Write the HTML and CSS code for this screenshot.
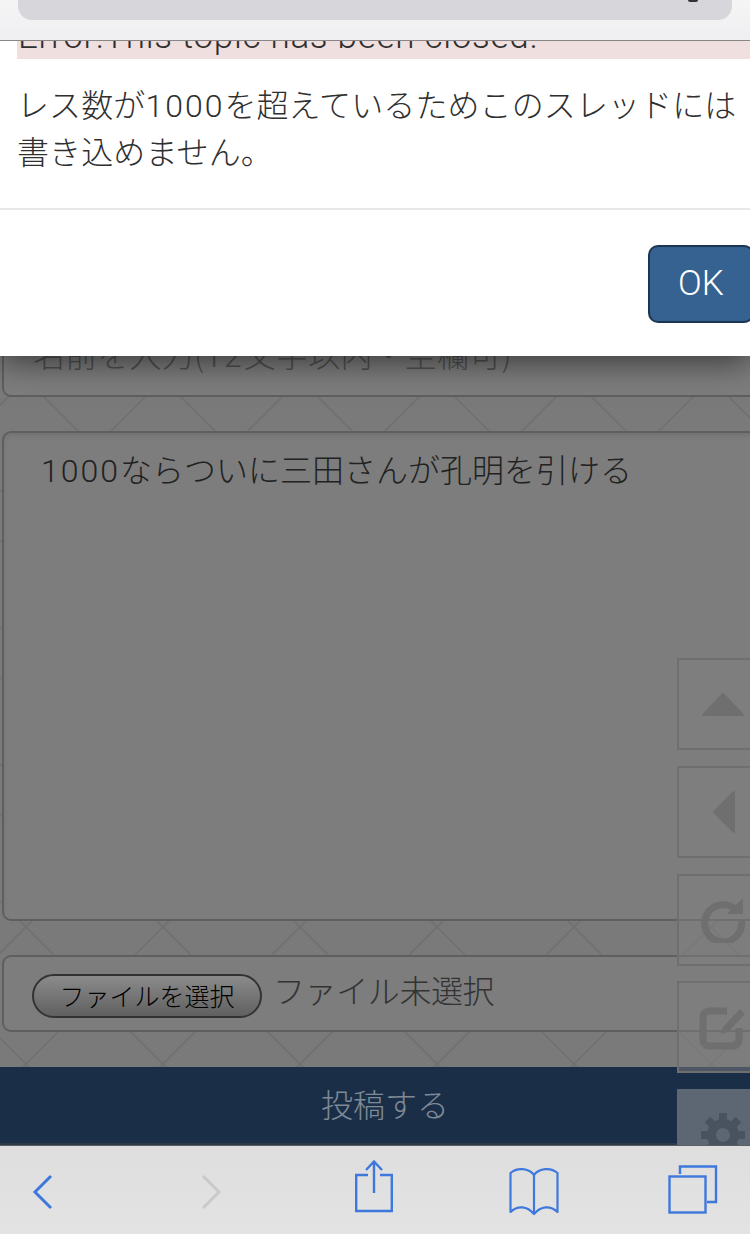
FILE: index.html
```html
<!DOCTYPE html>
<html lang="ja">
<head>
    <meta charset="UTF-8">
    <meta name="viewport" content="width=device-width, initial-scale=1.0">
    <title>書き込みエラー</title>
    <link rel="stylesheet" href="styles.css">
</head>
<body>
    <div class="phone">
        <div class="address-bar">
            <div class="address-pill"><span class="reload-tip"></span></div>
        </div>

        <div class="modal">
            <div class="modal-body">
                <div class="alert-strip"><span>Error:This topic has been closed.</span></div>
                <p class="modal-text">レス数が<span class="num">1000</span>を超えているためこのスレッドには<br>書き込めません。</p>
            </div>
            <div class="modal-footer">
                <button class="ok-btn">OK</button>
            </div>
        </div>

        <div class="post-form">
            <div class="field field-name">名前を入力(<span class="num">12</span>文字以内・空欄可)</div>
            <div class="field field-message"><span class="num">1000</span>ならついに三田さんが孔明を引ける</div>
            <div class="field field-file">
                <span class="file-btn">ファイルを選択</span>
                <span class="file-label">ファイル未選択</span>
            </div>
            <div class="submit-bar">投稿する</div>
        </div>

        <div class="side-nav">
            <div class="side-btn">
                <svg width="44" height="26" viewBox="0 0 44 26"><path d="M22 3 L42 24 L2 24 Z" fill="#6f6f6f" stroke="#6f6f6f" stroke-width="2" stroke-linejoin="round"/></svg>
            </div>
            <div class="side-btn">
                <svg width="44" height="44" viewBox="0 0 44 44"><path d="M33 2 L33 42 L13 22 Z" fill="#6f6f6f" stroke="#6f6f6f" stroke-width="2" stroke-linejoin="round"/></svg>
            </div>
            <div class="side-btn">
                <svg width="46" height="46" viewBox="0 0 46 46"><path d="M36 13 A18.500 18.500 0 1 0 41.500 24" fill="none" stroke="#6f6f6f" stroke-width="7"/><path d="M43 1 L43 17 L27 17 Z" fill="#6f6f6f"/></svg>
            </div>
            <div class="side-btn">
                <svg width="48" height="46" viewBox="0 0 48 46"><path d="M28 7 L10 7 A6 6 0 0 0 4 13 L4 36 A6 6 0 0 0 10 42 L34 42 A6 6 0 0 0 40 36 L40 24" fill="none" stroke="#6f6f6f" stroke-width="7"/><path d="M22 30 L24 23 L41 5 L46 10 L29 28 Z" fill="#6f6f6f"/></svg>
            </div>
            <div class="side-btn side-btn-active">
                <svg width="46" height="46" viewBox="0 0 46 46"><circle cx="23" cy="23" r="11.500" fill="none" stroke="#49535f" stroke-width="9"/><g stroke="#49535f" stroke-width="8"><path d="M23 1 V9"/><path d="M23 37 V45"/><path d="M1 23 H9"/><path d="M37 23 H45"/><path d="M7.500 7.500 L13 13"/><path d="M33 33 L38.500 38.500"/><path d="M38.500 7.500 L33 13"/><path d="M13 33 L7.500 38.500"/></g></svg>
            </div>
        </div>

        <div class="toolbar">
            <svg class="tool tool-back" width="21" height="36" viewBox="0 0 21 36"><path d="M19 2 L3 18 L19 34" fill="none" stroke="#3f78dc" stroke-width="3"/></svg>
            <svg class="tool tool-forward" width="21" height="36" viewBox="0 0 21 36"><path d="M2 2 L18 18 L2 34" fill="none" stroke="#c9c9cb" stroke-width="3"/></svg>
            <svg class="tool tool-share" width="38" height="54" viewBox="0 0 38 54"><path d="M13 15 H1.200 V51 H36.800 V15 H25" fill="none" stroke="#3f78dc" stroke-width="2.400"/><path d="M19 33 V2 M11 10 L19 1.500 L27 10" fill="none" stroke="#3f78dc" stroke-width="2.400"/></svg>
            <svg class="tool tool-book" width="50" height="50" viewBox="0 0 50 50"><path d="M25 8 C20 1 8 0 1.500 6 V45 C9 38 18 39 25 47 C32 39 41 38 48.500 45 V6 C42 0 30 1 25 8 Z M25 8 V47" fill="none" stroke="#3f78dc" stroke-width="2.200" stroke-linejoin="round"/></svg>
            <svg class="tool tool-tabs" width="50" height="49" viewBox="0 0 50 49"><path d="M12 9 V1.500 H48 V37 H39" fill="none" stroke="#3f78dc" stroke-width="2.400"/><rect x="1.500" y="11.500" width="36" height="36" fill="none" stroke="#3f78dc" stroke-width="2.400"/></svg>
        </div>
    </div>
</body>
</html>
```

FILE: styles.css
```css
* {
    box-sizing: border-box;
}
body {
    margin: 0;
    font-family: "Noto Sans CJK JP", "Noto Sans", sans-serif;
    font-weight: 300;
}
.phone {
    position: relative;
    width: 750px;
    height: 1234px;
    overflow: hidden;
    display: flex;
    flex-direction: column;
}
.num {
    font-family: Roboto, sans-serif;
    letter-spacing: 2px;
}

/* safari address bar */
.address-bar {
    position: relative;
    z-index: 4;
    flex: none;
    height: 41px;
    padding: 0 18px;
    background: linear-gradient(#f5f5f6, #efeef0);
    border-bottom: 1px solid #8a8688;
}
.address-pill {
    display: flex;
    justify-content: flex-end;
    height: 20px;
    padding-right: 34px;
    background: #d6d6db;
    border-radius: 0 0 14px 14px;
}
.reload-tip {
    width: 10px;
    height: 2px;
    background: #333;
    border-radius: 0 0 5px 5px;
}

/* dialog */
.modal {
    position: relative;
    z-index: 3;
    flex: none;
    height: 315px;
    background: #fff;
    box-shadow: 0 6px 30px rgba(0,0,0,0.55);
    color: #2f2f2f;
}
.modal-body {
    height: 169px;
    border-bottom: 2px solid #e8e8e8;
}
.alert-strip {
    display: flex;
    align-items: flex-end;
    height: 18px;
    margin-left: 17px;
    overflow: hidden;
    background: #efdfdf;
    font-family: Roboto, sans-serif;
    font-size: 35px;
    line-height: 36px;
}
.alert-strip span {
    flex: none;
    height: 36px;
    margin: 0 0 4px 1px;
    letter-spacing: 0.7px;
}
.modal-text {
    margin: 22px 0 0 17px;
    font-size: 32px;
    line-height: 44px;
    letter-spacing: 0.1px;
    white-space: nowrap;
}
.modal-footer {
    display: flex;
    justify-content: flex-end;
    margin-right: -4px;
    padding-top: 35px;
}
.ok-btn {
    width: 106px;
    height: 78px;
    padding: 0 0 1px;
    background: #366291;
    border: 2px solid #1d3550;
    border-radius: 10px;
    color: #fff;
    font-family: Roboto, sans-serif;
    font-weight: 300;
    font-size: 35px;
}

/* dimmed form behind dialog */
.post-form {
    flex: 1;
    display: flex;
    flex-direction: column;
    gap: 34px;
    padding-left: 2px;
    background-color: #7b7a7a;
    background-image:
        linear-gradient(45deg, transparent calc(50% - 1px), #727272 calc(50% - 1px), #727272 calc(50% + 1px), transparent calc(50% + 1px)),
        linear-gradient(-45deg, transparent calc(50% - 1px), #727272 calc(50% - 1px), #727272 calc(50% + 1px), transparent calc(50% + 1px));
    background-size: 137px 137px;
    background-position: 26px 23px;
}
.field {
    flex: none;
    width: 770px;
    background: #7d7d7d;
    border: 2px solid #5f5f5f;
    border-radius: 9px;
    font-size: 32px;
}
.field-name {
    height: 81px;
    margin-top: -40px;
    padding: 13px 0 0 29px;
    color: #505050;
    line-height: 44px;
    letter-spacing: 0.2px;
}
.field-message {
    height: 490px;
    padding: 13px 0 0 37px;
    color: #222;
    line-height: 44px;
    box-shadow: inset 0 3px 4px rgba(0,0,0,0.08);
}
.field-file {
    display: flex;
    align-items: flex-start;
    gap: 11px;
    height: 77px;
    padding: 17px 0 0 28px;
}
.file-btn {
    width: 230px;
    height: 44px;
    background: linear-gradient(#8b8b8b, #606060);
    border: 2px solid #333;
    border-radius: 22px;
    color: #000;
    font-size: 25px;
    line-height: 38px;
    text-align: center;
}
.file-label {
    margin-top: -7px;
    color: #333;
    line-height: 44px;
    letter-spacing: -0.4px;
}
.submit-bar {
    flex: none;
    height: 78px;
    margin: 1px 0 0 -2px;
    background: #1a2f47;
    border-bottom: 2px solid #2c3a4a;
    color: #7f8a96;
    font-size: 32px;
    line-height: 72px;
    text-align: center;
    text-indent: 20px;
}

/* floating nav buttons, right edge runs off the page */
.side-nav {
    position: absolute;
    z-index: 1;
    top: 658px;
    right: -19px;
    display: flex;
    flex-direction: column;
    gap: 15.750px;
}
.side-btn {
    display: flex;
    align-items: center;
    justify-content: center;
    width: 92px;
    height: 92px;
    background: rgba(128,128,128,0.5);
    border: 2px solid #6f6f6f;
}
.side-btn-active {
    background: #5c6773;
    border-color: #5c6773;
}

/* safari bottom toolbar */
.toolbar {
    position: relative;
    z-index: 2;
    flex: none;
    display: flex;
    align-items: flex-start;
    height: 89px;
    background: linear-gradient(#dedede, #e3e3e3);
    border-top: 1px solid #5c5f62;
}
.tool {
    flex: none;
}
.tool-back {
    margin: 28px 0 0 32px;
}
.tool-forward {
    margin: 28px 0 0 148px;
}
.tool-share {
    margin: 14px 0 0 133px;
}
.tool-book {
    margin: 21px 0 0 116px;
}
.tool-tabs {
    margin: 19px 0 0 109px;
}
```
